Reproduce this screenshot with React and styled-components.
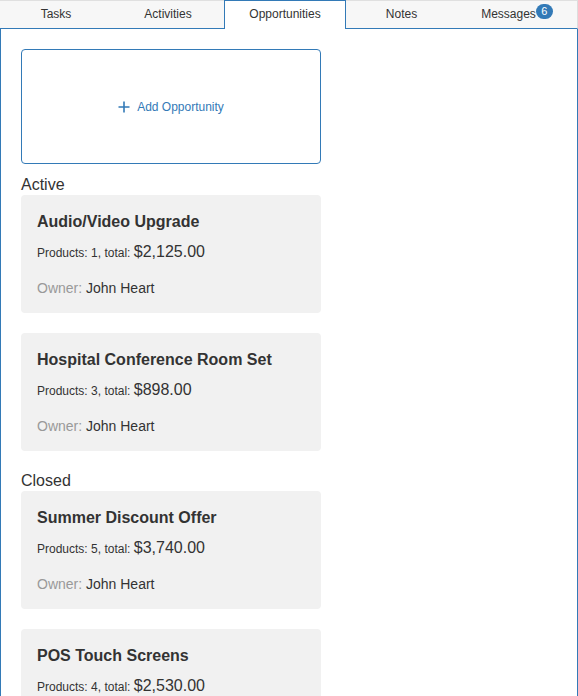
import React from 'react';
import styled, { createGlobalStyle } from 'styled-components';

const GlobalStyle = createGlobalStyle`
  body {
    margin: 0;
    background: #fff;
    font-family: "Liberation Sans", Arial, sans-serif;
    color: #333;
  }
`;

const BLUE = '#337ab7';

const tabs = [
  { id: 'tasks', label: 'Tasks', width: 112 },
  { id: 'activities', label: 'Activities', width: 112 },
  { id: 'opportunities', label: 'Opportunities', width: 122 },
  { id: 'notes', label: 'Notes', width: 111 },
  { id: 'messages', label: 'Messages', badge: 6 },
];

const groups = [
  {
    title: 'Active',
    items: [
      { name: 'Audio/Video Upgrade', products: 1, total: '$2,125.00', owner: 'John Heart' },
      { name: 'Hospital Conference Room Set', products: 3, total: '$898.00', owner: 'John Heart' },
    ],
  },
  {
    title: 'Closed',
    items: [
      { name: 'Summer Discount Offer', products: 5, total: '$3,740.00', owner: 'John Heart' },
      { name: 'POS Touch Screens', products: 4, total: '$2,530.00', owner: 'John Heart' },
    ],
  },
];

const Page = styled.div`
  width: 578px;
  display: flex;
  flex-direction: column;
`;

const TabBar = styled.div`
  display: flex;
  background: #f7f7f7;
  border-top: 1px solid #e0e0e0;
  border-right: 1px solid #ddd;
  border-bottom: 1px solid ${BLUE};
  box-sizing: border-box;
  height: 29px;
`;

const Tab = styled.div`
  flex: ${(p) => (p.width ? `0 0 ${p.width}px` : '1 1 auto')};
  box-sizing: border-box;
  display: flex;
  align-items: center;
  justify-content: center;
  padding-bottom: 2px;
  font-size: 12px;
  color: #333;
  height: ${(p) => (p.active ? '29px' : '27px')};
  margin-top: ${(p) => (p.active ? '-1px' : '0')};
  background: ${(p) => (p.active ? '#fff' : 'transparent')};
  border: 1px solid ${(p) => (p.active ? BLUE : 'transparent')};
  border-bottom: none;
`;

const Badge = styled.span`
  display: inline-block;
  align-self: flex-start;
  margin-top: 2px;
  min-width: 17px;
  height: 15px;
  padding: 0 4px;
  box-sizing: border-box;
  border-radius: 8px;
  background: ${BLUE};
  color: #fff;
  font-size: 11px;
  line-height: 15px;
  text-align: center;
`;

const Content = styled.div`
  border-left: 1px solid ${BLUE};
  border-right: 1px solid ${BLUE};
  padding: 20px 20px 0;
  min-height: 700px;
`;

const AddBox = styled.button`
  width: 300px;
  height: 115px;
  box-sizing: border-box;
  border: 1px solid ${BLUE};
  border-radius: 4px;
  background: #fff;
  color: ${BLUE};
  font-family: inherit;
  font-size: 12px;
  display: flex;
  align-items: center;
  justify-content: center;
  gap: 7px;
  margin-bottom: 11px;
  cursor: pointer;
  padding: 0;
`;

const Group = styled.section`
  & + & {
    margin-top: 2px;
  }
`;

const GroupTitle = styled.div`
  font-size: 16px;
  line-height: 20px;
  color: #333;
`;

const Card = styled.div`
  width: 300px;
  box-sizing: border-box;
  background: #f1f1f1;
  border-radius: 4px;
  padding: 17px 16px 15px;
  margin-bottom: 20px;
`;

const CardTitle = styled.div`
  font-size: 16px;
  font-weight: bold;
  line-height: 20px;
  color: #333;
`;

const CardLine = styled.div`
  font-size: ${(p) => p.size || 12}px;
  line-height: 20px;
  margin-top: ${(p) => p.gap}px;
  color: #333;
`;

const Price = styled.span`
  font-size: 16px;
`;

const Muted = styled.span`
  color: #999;
`;

const PlusIcon = () => (
  <svg width="12" height="12" viewBox="0 0 12 12">
    <path d="M6 0.5v11M0.5 6h11" stroke={BLUE} strokeWidth="1.6" fill="none" />
  </svg>
);

const App = () => (
  <Page>
    <GlobalStyle />
    <TabBar>
      {tabs.map((t) => (
        <Tab key={t.id} width={t.width} active={t.id === 'opportunities'}>
          {t.label}
          {t.badge ? <Badge>{t.badge}</Badge> : null}
        </Tab>
      ))}
    </TabBar>
    <Content>
      <AddBox>
        <PlusIcon />
        Add Opportunity
      </AddBox>
      {groups.map((g) => (
        <Group key={g.title}>
          <GroupTitle>{g.title}</GroupTitle>
          {g.items.map((o) => (
            <Card key={o.name}>
              <CardTitle>{o.name}</CardTitle>
              <CardLine gap={10}>
                Products: {o.products}, total: <Price>{o.total}</Price>
              </CardLine>
              <CardLine gap={15} size={14}>
                <Muted>Owner:</Muted> {o.owner}
              </CardLine>
            </Card>
          ))}
        </Group>
      ))}
    </Content>
  </Page>
);

export default App;
